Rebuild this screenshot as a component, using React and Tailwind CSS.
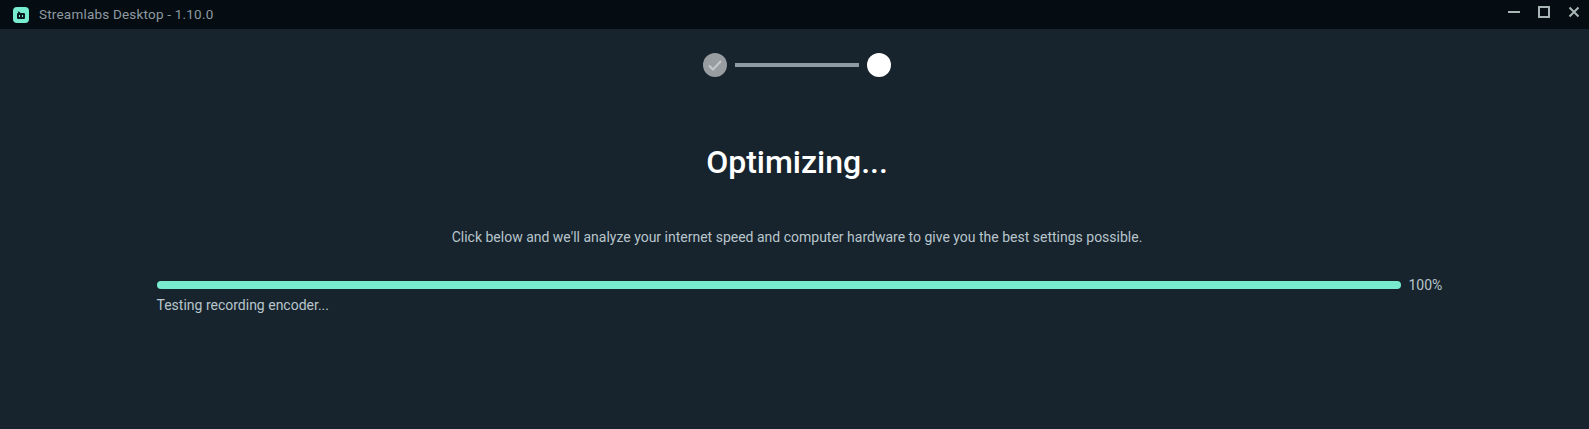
const steps = (
  <div className="flex items-center gap-2">
    <div className="w-6 h-6 rounded-full bg-[#989da1] flex items-center justify-center">
      <svg width="16" height="16" viewBox="0 0 16 16" fill="none" stroke="#c4c8ca" strokeWidth="2.2">
        <path d="M2 8.5 L6 12.5 L14 4" />
      </svg>
    </div>
    <div className="w-[124px] h-1 bg-[#8f9aa2]" />
    <div className="w-6 h-6 rounded-full bg-white" />
  </div>
)

export default function App() {
  return (
    <div className="w-[1589px] h-[429px] overflow-hidden flex flex-col bg-[#17232d] font-['Roboto',sans-serif]">
      {/* Title bar */}
      <div className="h-[29px] shrink-0 bg-[#060d12] flex items-center pl-[13px] pr-[9px]">
        <div className="w-4 h-4 rounded-[4px] bg-[#78eccf] flex items-center justify-center">
          <svg width="10" height="10" viewBox="0 0 10 10" fill="#0b1a20">
            <path d="M2.5 1 L4.5 3 H8 Q9 3 9 4 V8 Q9 9 8 9 H2 Q1 9 1 8 V4 Q1 3 2 3 Z" />
            <rect x="3" y="5" width="1" height="2" fill="#78eccf" />
            <rect x="6" y="5" width="1" height="2" fill="#78eccf" />
          </svg>
        </div>
        <span className="ml-[10px] text-[13.5px] text-[#8d9aa1] tracking-[0.2px]">Streamlabs Desktop - 1.10.0</span>
        <div className="ml-auto mb-[5px] flex items-center gap-[18px]">
          <div className="w-3 h-0.5 bg-[#a9b6b6]" />
          <div className="w-3 h-3 border-2 border-[#a9b6b6]" />
          <svg width="12" height="12" viewBox="0 0 12 12" stroke="#a9b6b6" strokeWidth="2">
            <path d="M1.5 1.5 L10.5 10.5 M10.5 1.5 L1.5 10.5" />
          </svg>
        </div>
      </div>

      {/* Content */}
      <div className="flex flex-col items-center pt-[24px] pl-[5px]">
        {steps}
        <h1 className="mt-[65px] text-[32px] leading-[40px] font-medium text-white">Optimizing...</h1>
        <p className="mt-[45px] text-[14px] leading-[20px] text-[#b8c6cc]">
          Click below and we'll analyze your internet speed and computer hardware to give you the best settings possible.
        </p>
        <div className="w-[1286px] mt-[28px] ml-[5px]">
          <div className="flex items-center gap-2">
            <div className="w-[1244px] h-2 rounded-full bg-[#78eccf]" />
            <span className="text-[14px] leading-[20px] text-[#b8c6cc]">100%</span>
          </div>
          <div className="text-[14px] leading-[20px] text-[#b8c6cc]">Testing recording encoder...</div>
        </div>
      </div>
    </div>
  )
}
